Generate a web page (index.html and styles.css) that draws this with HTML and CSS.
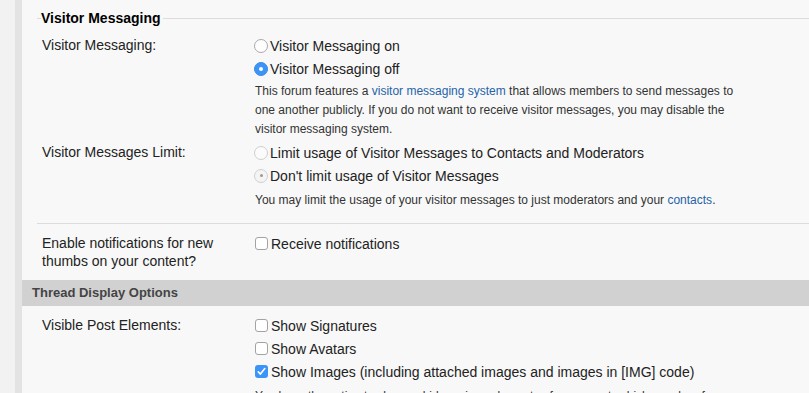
FILE: index.html
```html
<!DOCTYPE html>
<html>
<head>
<meta charset="utf-8">
<link rel="stylesheet" href="styles.css">
</head>
<body>
<div class="side"></div>
<div class="rule"></div>
<div class="main">
  <div class="legend"><span class="tick"></span><span class="legend-text">Visitor Messaging</span><span class="line"></span></div>
  <div class="row row-first">
    <div class="label">Visitor Messaging:</div>
    <div class="controls">
      <div class="opt"><span class="radio"></span>Visitor Messaging on</div>
      <div class="opt"><span class="radio on"></span>Visitor Messaging off</div>
      <p class="desc desc-tight">This forum features a <a href="#">visitor messaging system</a> that allows members to send messages to one another publicly. If you do not want to receive visitor messages, you may disable the visitor messaging system.</p>
    </div>
  </div>
  <div class="row row-limit">
    <div class="label">Visitor Messages Limit:</div>
    <div class="controls">
      <div class="opt"><span class="radio dim"></span>Limit usage of Visitor Messages to Contacts and Moderators</div>
      <div class="opt"><span class="radio dimon"></span>Don't limit usage of Visitor Messages</div>
      <p class="desc">You may limit the usage of your visitor messages to just moderators and your <a href="#">contacts</a>.</p>
    </div>
  </div>
  <div class="sep"></div>
  <div class="row row-notify">
    <div class="label">Enable notifications for new thumbs on your content?</div>
    <div class="controls">
      <div class="opt"><span class="check"></span>Receive notifications</div>
    </div>
  </div>
  <div class="bar">Thread Display Options</div>
  <div class="row row-posts">
    <div class="label">Visible Post Elements:</div>
    <div class="controls">
      <div class="opt"><span class="check"></span>Show Signatures</div>
      <div class="opt"><span class="check"></span>Show Avatars</div>
      <div class="opt"><span class="check on"><svg width="13" height="13" viewBox="0 0 13 13"><path d="M3.2 6.8 L5.4 9.1 L9.8 3.6" fill="none" stroke="#fff" stroke-width="1.6" stroke-linecap="round" stroke-linejoin="round"/></svg></span>Show Images (including attached images and images in [IMG] code)</div>
      <p class="desc">You have the option to show or hide various elements of every post, which may be of use if you are on a slow connection.</p>
    </div>
  </div>
</div>
</body>
</html>
```
FILE: styles.css
```css
html, body {
  margin: 0;
  padding: 0;
  height: 100%;
  overflow: hidden;
}
body {
  display: flex;
  font-family: "Liberation Sans", Arial, sans-serif;
  color: #222;
  background: #f8f8f8;
}
.side {
  width: 15px;
  flex: none;
  background: #f2f2f2;
}
.rule {
  width: 7px;
  flex: none;
  background: #e3e3e3;
}
.main {
  flex: 1;
  background: #f8f8f8;
  padding-top: 10px;
}
.legend {
  display: flex;
  align-items: center;
  margin-left: 15px;
  height: 16px;
}
.tick {
  width: 4px;
  height: 1px;
  background: #dcdcdc;
}
.legend-text {
  font-weight: bold;
  font-size: 14px;
  color: #000;
  padding-right: 2px;
}
.line {
  flex: 1;
  height: 1px;
  background: #dcdcdc;
}
.row {
  display: grid;
  grid-template-columns: 213px 1fr;
  padding-left: 20px;
}
.row-first {
  margin-top: 8px;
}
.row-limit {
  margin-top: 2px;
}
.label {
  font-size: 14px;
  line-height: 18px;
  padding-top: 2px;
  color: #222;
}
.controls {
  font-size: 14px;
}
.opt {
  display: flex;
  align-items: center;
  height: 23px;
  color: #222;
}
.radio {
  width: 12px;
  height: 12px;
  border-radius: 50%;
  border: 1px solid #a9a9a9;
  background: #fff;
  margin-right: 2px;
  margin-left: -1px;
  position: relative;
  flex: none;
}
.radio.on {
  background: #3c94f8;
  border-color: #3a8be6;
}
.radio.on::after,
.radio.dimon::after {
  content: "";
  position: absolute;
  left: 4px;
  top: 4px;
  width: 4px;
  height: 4px;
  border-radius: 50%;
  background: #fff;
}
.radio.dim {
  border-color: #cfcfcf;
  background: #fbfbfb;
}
.radio.dimon {
  border-color: #d0d0d0;
  background: #f4f4f4;
}
.radio.dimon::after {
  background: #9a9a9a;
  left: 4.5px;
  top: 4.5px;
  width: 3px;
  height: 3px;
}
.check {
  width: 11px;
  height: 11px;
  border: 1px solid #a3a3a3;
  border-radius: 3px;
  background: #fff;
  margin-right: 3px;
  flex: none;
  display: flex;
}
.check.on {
  width: 13px;
  height: 13px;
  border: none;
  background: #3c94f8;
}
.desc {
  margin: 4px 0 0;
  width: 480px;
  font-size: 12px;
  line-height: 19px;
  color: #333;
}
.desc-tight {
  margin-top: 2px;
}
.desc a {
  color: #2563a8;
  text-decoration: none;
}
.sep {
  height: 1px;
  background: #dcdcdc;
  margin: 13px 0 0 15px;
}
.row-notify {
  margin-top: 8px;
}
.bar {
  margin-top: 10px;
  height: 26px;
  line-height: 26px;
  background: #d1d1d1;
  font-weight: bold;
  font-size: 13px;
  color: #444;
  padding-left: 10px;
}
.row-posts {
  margin-top: 8px;
}
```
